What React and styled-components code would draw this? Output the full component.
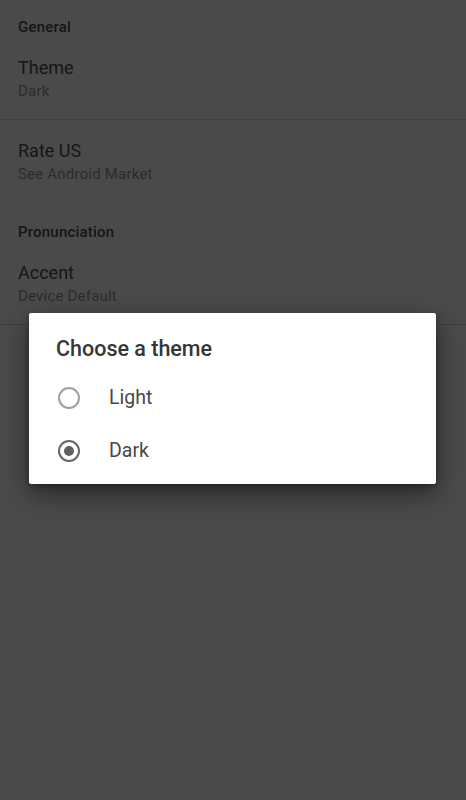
import React from 'react';
import styled, { createGlobalStyle } from 'styled-components';

const Global = createGlobalStyle`
  html, body {
    margin: 0;
    padding: 0;
    background: #4a4a4a;
  }
  body {
    font-family: Roboto, "Noto Sans", "Liberation Sans", sans-serif;
  }
`;

const Screen = styled.div`
  position: relative;
  width: 466px;
  height: 800px;
  overflow: hidden;
  background: #f7f7f7;
`;

const Group = styled.section`
  margin-top: ${p => (p.first ? '0' : '2px')};
`;

const Header = styled.div`
  padding: 17px 18px 0;
  font-size: 15px;
  line-height: 20px;
  font-weight: 500;
  letter-spacing: 0.2px;
  color: #4a4a4a;
`;

const Item = styled.div`
  padding: 19px 18px 17px;
  border-bottom: ${p => (p.divider ? '1px solid #d2d2d2' : '1px solid transparent')};
`;

const Title = styled.div`
  font-size: 18px;
  line-height: 24px;
  color: #4c4c4c;
`;

const Summary = styled.div`
  font-size: 15px;
  line-height: 22px;
  letter-spacing: 0.2px;
  color: #939393;
`;

const Scrim = styled.div`
  position: absolute;
  inset: 0;
  background: rgba(0, 0, 0, 0.7);
  padding: 313px 30px 0 29px;
`;

const Dialog = styled.div`
  background: #fff;
  border-radius: 2px;
  box-shadow: 0 10px 26px rgba(0, 0, 0, 0.45), 0 2px 6px rgba(0, 0, 0, 0.3);
  padding: 24px 0 7px;
`;

const DialogTitle = styled.h2`
  margin: 0 0 10px;
  padding: 0 27px;
  font-size: 21.5px;
  line-height: 24px;
  font-weight: 500;
  color: #363636;
`;

const Option = styled.label`
  display: flex;
  align-items: center;
  height: 53px;
  padding: 0 29px;
  gap: 29px;
  font-size: 19.5px;
  color: #484848;
`;

const Radio = styled.span`
  box-sizing: border-box;
  width: 22px;
  height: 22px;
  border-radius: 50%;
  border: 2px solid ${p => (p.checked ? '#666' : '#a0a0a0')};
  display: flex;
  align-items: center;
  justify-content: center;
  flex-shrink: 0;

  &::after {
    content: '';
    display: ${p => (p.checked ? 'block' : 'none')};
    width: 10px;
    height: 10px;
    border-radius: 50%;
    background: #616161;
  }
`;

const groups = [
  {
    name: 'General',
    items: [
      { title: 'Theme', summary: 'Dark', divider: true },
      { title: 'Rate US', summary: 'See Android Market' },
    ],
  },
  {
    name: 'Pronunciation',
    items: [{ title: 'Accent', summary: 'Device Default', divider: true }],
  },
];

const themes = [
  { label: 'Light', checked: false },
  { label: 'Dark', checked: true },
];

export default function App() {
  return (
    <>
      <Global />
      <Screen>
        {groups.map((g, i) => (
          <Group key={g.name} first={i === 0}>
            <Header>{g.name}</Header>
            {g.items.map(it => (
              <Item key={it.title} divider={it.divider}>
                <Title>{it.title}</Title>
                <Summary>{it.summary}</Summary>
              </Item>
            ))}
          </Group>
        ))}
        <Scrim>
          <Dialog>
            <DialogTitle>Choose a theme</DialogTitle>
            {themes.map(t => (
              <Option key={t.label}>
                <Radio checked={t.checked} />
                {t.label}
              </Option>
            ))}
          </Dialog>
        </Scrim>
      </Screen>
    </>
  );
}
